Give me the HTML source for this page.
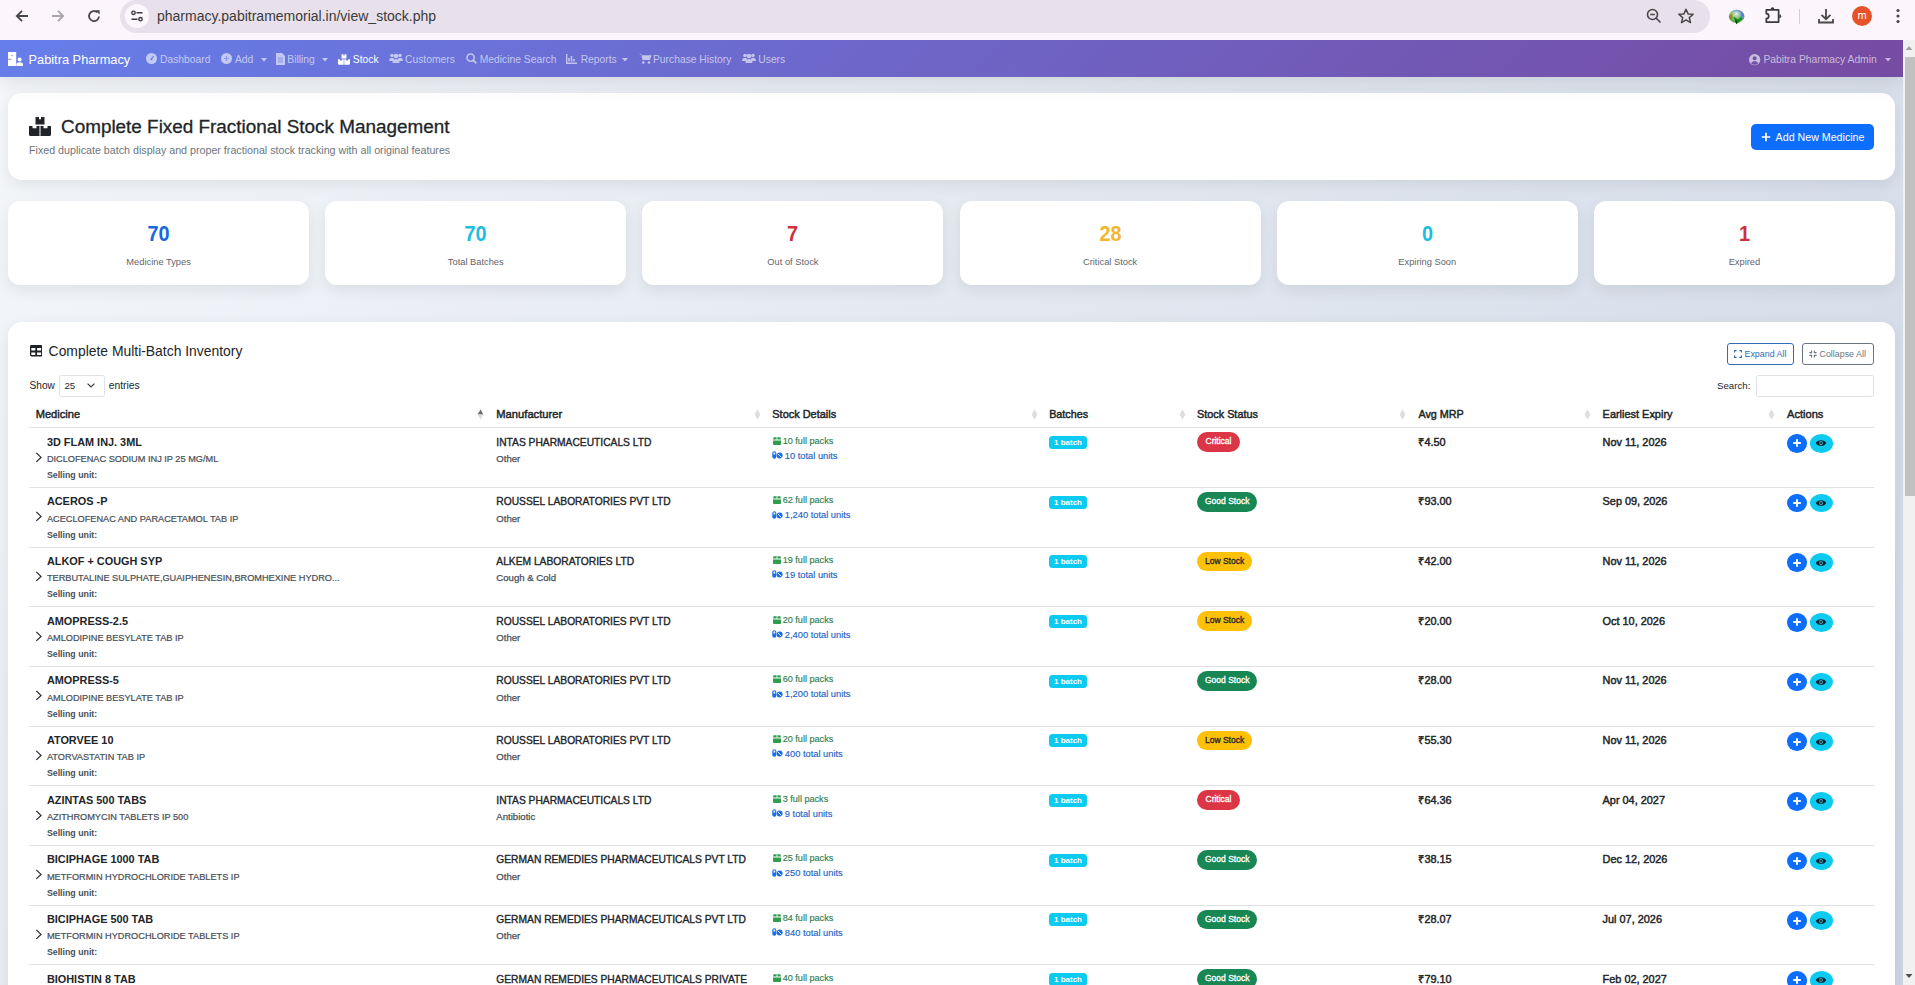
<!DOCTYPE html>
<html><head><meta charset="utf-8"><title>Stock</title>
<style>
*{box-sizing:border-box;margin:0;padding:0}
html,body{width:1915px;height:985px;overflow:hidden}
body{position:relative;font-family:"Liberation Sans",sans-serif;background:#fcf5fb;color:#212529}
.a{position:absolute;white-space:nowrap;line-height:1}
#chrome{position:absolute;left:0;top:0;width:1915px;height:40px;background:#fcf5fb}
#pill{position:absolute;left:120px;top:0;width:1590px;height:33px;background:#e8e0ea;border-radius:16.5px}
#page{position:absolute;left:0;top:40px;width:1903px;height:945px;overflow:hidden;background:linear-gradient(135deg,#f5f7fa 0%,#cdd6e5 100%)}
#nav{position:absolute;left:0;top:0;width:1903px;height:37px;background:linear-gradient(135deg,#667eea 0%,#764ba2 100%);box-shadow:0 4px 22px rgba(0,0,0,0.11);z-index:1}
.card{position:absolute;background:#fff;border-radius:14px;box-shadow:0 5px 15px rgba(0,0,0,0.08)}
.navt{color:rgba(255,255,255,0.62);font-size:10.3px}
.row{position:absolute;left:29px;width:1845px;height:59.65px;border-bottom:1px solid #dee2e6}
.row>div{position:absolute;white-space:nowrap;line-height:1}
.chev{left:7px;top:25px;width:8px;height:10px}
.chev svg{display:block}
.mname{left:18px;top:9.2px;font-size:10.8px;font-weight:700;color:#212529}
.gen{left:18px;top:26.3px;font-size:9.2px;color:#5c636a}
.sell{left:18px;top:42.2px;font-size:8.8px;font-weight:700;color:#495057}
.mfr{left:467px;top:9.5px;font-size:10.15px;font-weight:700;color:#212529}
.cat{left:467px;top:26px;font-size:9.6px;color:#5c636a}
.packs{left:743.5px;top:8px;font-size:9.1px;color:#198754}
.units{left:743.5px;top:23.5px;font-size:9.3px;color:#0d6efd}
.packs svg,.units svg{position:absolute;left:0;top:1px}
.packs span{position:absolute;left:10px;top:0}
.units span{position:absolute;left:12px;top:0}
.bbadge{width:38px;height:13.3px;border-radius:3.5px;background:#0dcaf0;color:#fff;font-size:8px;font-weight:700;text-align:center;line-height:13.8px!important}
.sbadge{height:19.8px;border-radius:10px;font-size:8.5px;font-weight:400;line-height:19.8px!important;padding:0 8px;min-width:43px;text-align:center;-webkit-text-stroke:0.3px currentColor}
.crit{background:#dc3545;color:#fff}
.good{background:#198754;color:#fff}
.low{background:#ffc107;color:#212529}
.mrp{left:1389.4px;top:9.5px;font-size:10.9px;font-weight:700;color:#212529}
.exp{left:1573.6px;top:9.5px;font-size:10.75px;font-weight:700;color:#212529}
.actplus{left:1758px;top:6.5px;width:19.5px;height:18.7px;border-radius:50%;background:#0d6efd}
.acteye{left:1781px;top:6.5px;width:22.7px;height:18.7px;border-radius:50%;background:#0dcaf0}
.actplus svg,.acteye svg{position:absolute;left:50%;top:50%;transform:translate(-50%,-50%)}
.th{position:absolute;top:409px;font-size:10.3px;font-weight:700;color:#212529;line-height:1;white-space:nowrap}
.sort{position:absolute;top:408px;width:7px;height:12px}
.stnum{position:absolute;width:301px;text-align:center;top:222px;font-size:20.7px;font-weight:700;line-height:1}
.stlab{position:absolute;width:301px;text-align:center;top:256px;font-size:9.3px;color:#6c757d;line-height:1}
#sb{position:absolute;left:1903px;top:40px;width:12px;height:945px;background:#f1f1f1}
#thumb{position:absolute;left:2px;top:17px;width:10px;height:439px;background:#c1c1c1}
</style></head><body>
<div id="chrome">
 <svg class="a" style="left:14px;top:8px" width="16" height="16" viewBox="0 0 16 16"><path d="M14 8H3M8 2.8L2.8 8L8 13.2" fill="none" stroke="#474747" stroke-width="1.8"/></svg>
 <svg class="a" style="left:50px;top:8px" width="16" height="16" viewBox="0 0 16 16"><path d="M2 8H13M8 2.8L13.2 8L8 13.2" fill="none" stroke="#a9a6a9" stroke-width="1.8"/></svg>
 <svg class="a" style="left:86px;top:8px" width="16" height="16" viewBox="0 0 16 16"><path d="M13 8.5A5 5 0 1 1 11.2 4.2" fill="none" stroke="#474747" stroke-width="1.8"/><path d="M9.2 2.2H13.6V6.6Z" fill="#474747"/></svg>
 <div id="pill"></div>
 <div class="a" style="left:125px;top:4px;width:24px;height:24px;border-radius:50%;background:#fcf7fc"></div>
 <svg class="a" style="left:130px;top:9px" width="14" height="14" viewBox="0 0 14 14"><circle cx="3.5" cy="3.8" r="1.7" fill="none" stroke="#3a3a3a" stroke-width="1.4"/><path d="M6.5 3.8H12.5M1.5 10.2H7.5" stroke="#3a3a3a" stroke-width="1.5"/><circle cx="10.5" cy="10.2" r="1.7" fill="none" stroke="#3a3a3a" stroke-width="1.4"/></svg>
 <div class="a" style="left:157px;top:9px;font-size:14px;color:#3b3b3b">pharmacy.pabitramemorial.in/view_stock.php</div>
 <svg class="a" style="left:1646px;top:8px" width="16" height="16" viewBox="0 0 16 16"><circle cx="6.5" cy="6.5" r="5" fill="none" stroke="#474747" stroke-width="1.6"/><path d="M4.2 6.5H8.8M10.2 10.2L14.5 14.5" stroke="#474747" stroke-width="1.6"/></svg>
 <svg class="a" style="left:1677px;top:8px" width="18" height="16" viewBox="0 0 18 16"><path d="M9 1.2L11.1 5.9L16.2 6.3L12.3 9.6L13.5 14.6L9 11.9L4.5 14.6L5.7 9.6L1.8 6.3L6.9 5.9Z" fill="none" stroke="#474747" stroke-width="1.5" stroke-linejoin="round"/></svg>
 <svg class="a" style="left:1727.5px;top:8.5px" width="17" height="16" viewBox="0 0 17 16"><defs><linearGradient id="g1" x1="0" y1="1" x2="1" y2="0"><stop offset="0" stop-color="#4a9a3a"/><stop offset="0.45" stop-color="#8cc860"/><stop offset="0.7" stop-color="#5a90c8"/><stop offset="1" stop-color="#2a5aa0"/></linearGradient><radialGradient id="g2" cx="0.5" cy="0.3" r="0.35"><stop offset="0" stop-color="#f0ffe0" stop-opacity="0.9"/><stop offset="1" stop-color="#f0ffe0" stop-opacity="0"/></radialGradient></defs><ellipse cx="8.6" cy="7.4" rx="7.8" ry="6.6" fill="url(#g1)"/><ellipse cx="8.6" cy="7.4" rx="7.8" ry="6.6" fill="url(#g2)"/><path d="M1.2 8.5C1.8 5.6 3.5 4.6 4.8 5.4C4.2 6.8 3.8 8.5 4 10.5C2.6 10.6 1.6 10 1.2 8.5Z" fill="#b5653a" opacity="0.7"/><path d="M5.6 7.4L10 10.6L13.6 7.8L14.4 10L8.4 15.2L6.6 10.6Z" fill="#148a1c"/><path d="M8.4 15.2L6.6 10.6L9.8 12.2Z" fill="#0a4a10"/></svg>
 <svg class="a" style="left:1765px;top:7px" width="17" height="16" viewBox="0 0 17 16"><path d="M1.3 2.9H13.6V15.1H1.3V11.6A2.4 2.4 0 0 0 1.3 6.6Z" fill="none" stroke="#3a3a3a" stroke-width="1.7" stroke-linejoin="round"/><path d="M5.7 2.2A1.85 1.85 0 0 1 9.4 2.2Z" fill="#3a3a3a"/><path d="M14.3 7.3A1.9 1.9 0 0 1 14.3 11.1Z" fill="#3a3a3a"/></svg>
 <div class="a" style="left:1799px;top:9px;width:1px;height:15px;background:#d6cfd8"></div>
 <svg class="a" style="left:1817px;top:8px" width="18" height="16" viewBox="0 0 18 16"><path d="M9 1V11M4.5 6.8L9 11.2L13.5 6.8M2 11V14.5H16V11" fill="none" stroke="#474747" stroke-width="1.8"/></svg>
 <div class="a" style="left:1852px;top:6px;width:20px;height:20px;border-radius:50%;background:#e4532a;color:#fff;font-size:11px;text-align:center;line-height:19px">m</div>
 <svg class="a" style="left:1895px;top:8px" width="6" height="16" viewBox="0 0 6 16"><circle cx="3" cy="2.5" r="1.6" fill="#474747"/><circle cx="3" cy="8" r="1.6" fill="#474747"/><circle cx="3" cy="13.5" r="1.6" fill="#474747"/></svg>
</div>

<div id="page">
 <div id="nav">
  <svg class="a" style="left:8px;top:12px" width="15.5" height="14" viewBox="0 0 15.5 14"><path d="M0 0H8.2V14H0Z" fill="#fff"/><path d="M2.8 3.2L4.1 4.6L5.4 3.2Z" fill="#8a90c0"/><path d="M0 7.3H3.6" stroke="#8088c8" stroke-width="0.9"/><circle cx="11.6" cy="7.6" r="2" fill="#fff"/><path d="M8.4 14V12.2C8.4 10.9 9.6 10.2 11.6 10.2S15 10.9 15 12.2V14Z" fill="#fff"/></svg>
  <div class="a" style="left:28.5px;top:14px;font-size:12.8px;color:#fff">Pabitra Pharmacy</div>
  <svg class="a" style="left:145.8px;top:13px" width="11" height="11" viewBox="0 0 11 11"><circle cx="5.5" cy="5.5" r="5.5" fill="rgba(255,255,255,0.6)"/><path d="M5.5 6L7.5 3" stroke="#667eea" stroke-width="1.2"/><circle cx="5.5" cy="6.3" r="1" fill="#667eea"/></svg>
<div class="a" style="left:160px;top:15px;font-size:10.3px;color:rgba(255,255,255,0.62);font-weight:400;">Dashboard</div>
<svg class="a" style="left:221.4px;top:13px" width="11" height="11" viewBox="0 0 11 11"><circle cx="5.5" cy="5.5" r="5.5" fill="rgba(255,255,255,0.6)"/><path d="M5.5 3V8M3 5.5H8" stroke="rgba(102,126,234,0.6)" stroke-width="1.2"/></svg>
<div class="a" style="left:235px;top:15px;font-size:10.3px;color:rgba(255,255,255,0.62);font-weight:400;">Add</div>
<svg class="a" style="left:260.5px;top:17.5px" width="6" height="4" viewBox="0 0 6 4"><path d="M0 0H6L3 3.5Z" fill="rgba(255,255,255,0.6)"/></svg>
<svg class="a" style="left:276px;top:12.5px" width="9" height="12" viewBox="0 0 9 12"><path d="M0 0H6L9 3V12H0Z" fill="rgba(255,255,255,0.6)"/><path d="M2 5H7M2 7H7M2 9H7" stroke="rgba(100,110,220,0.7)" stroke-width="0.8"/></svg>
<div class="a" style="left:287.3px;top:15px;font-size:10.3px;color:rgba(255,255,255,0.62);font-weight:400;">Billing</div>
<svg class="a" style="left:321.5px;top:17.5px" width="6" height="4" viewBox="0 0 6 4"><path d="M0 0H6L3 3.5Z" fill="rgba(255,255,255,0.6)"/></svg>
<svg class="a" style="left:338px;top:14px" width="12" height="11" viewBox="0 0 22 19"><path d="M6.5 0H10V2.2H12V0H15.5V7.5H6.5Z" fill="#fff"/><path d="M0 9H3.5V11.2H7.5V9H10.5V19H1.5A1.5 1.5 0 0 1 0 17.5Z" fill="#fff"/><path d="M11.5 9H14.5V11.2H18.5V9H22V17.5A1.5 1.5 0 0 1 20.5 19H11.5Z" fill="#fff"/></svg>
<div class="a" style="left:352.8px;top:15px;font-size:10.3px;color:#fff;font-weight:400;">Stock</div>
<svg class="a" style="left:389px;top:13px" width="14" height="10" viewBox="0 0 14 10"><circle cx="3" cy="2.5" r="1.8" fill="rgba(255,255,255,0.6)"/><circle cx="11" cy="2.5" r="1.8" fill="rgba(255,255,255,0.6)"/><circle cx="7" cy="3" r="2.3" fill="rgba(255,255,255,0.6)"/><path d="M0 8C0 5.5 1.5 5 3 5S5 5.5 5 6V8ZM9 6C9 5.5 9.5 5 11 5S14 5.5 14 8H9ZM3.5 10C3.5 7 5 6 7 6S10.5 7 10.5 10Z" fill="rgba(255,255,255,0.6)"/></svg>
<div class="a" style="left:405px;top:15px;font-size:10.3px;color:rgba(255,255,255,0.62);font-weight:400;">Customers</div>
<svg class="a" style="left:465.5px;top:13px" width="11" height="11" viewBox="0 0 11 11"><circle cx="4.6" cy="4.6" r="3.6" fill="none" stroke="rgba(255,255,255,0.6)" stroke-width="1.6"/><path d="M7.3 7.3L10.3 10.3" stroke="rgba(255,255,255,0.6)" stroke-width="1.8"/></svg>
<div class="a" style="left:479.8px;top:15px;font-size:10.3px;color:rgba(255,255,255,0.62);font-weight:400;">Medicine Search</div>
<svg class="a" style="left:566.4px;top:13.5px" width="11" height="10" viewBox="0 0 11 10"><path d="M0.7 0V9.3H11" fill="none" stroke="rgba(255,255,255,0.6)" stroke-width="1.4"/><path d="M3 7.5V4M5.5 7.5V2M8 7.5V5" stroke="rgba(255,255,255,0.6)" stroke-width="1.6"/></svg>
<div class="a" style="left:580.7px;top:15px;font-size:10.3px;color:rgba(255,255,255,0.62);font-weight:400;">Reports</div>
<svg class="a" style="left:621.5px;top:17.5px" width="6" height="4" viewBox="0 0 6 4"><path d="M0 0H6L3 3.5Z" fill="rgba(255,255,255,0.6)"/></svg>
<svg class="a" style="left:638.8px;top:13px" width="13" height="11" viewBox="0 0 13 11"><path d="M0 0.8H2.2L3.5 7H11L12.5 2.2H2.8Z" fill="rgba(255,255,255,0.6)"/><circle cx="4.3" cy="9.5" r="1.3" fill="rgba(255,255,255,0.6)"/><circle cx="10" cy="9.5" r="1.3" fill="rgba(255,255,255,0.6)"/></svg>
<div class="a" style="left:653px;top:15px;font-size:10.3px;color:rgba(255,255,255,0.62);font-weight:400;">Purchase History</div>
<svg class="a" style="left:742px;top:13px" width="14" height="10" viewBox="0 0 14 10"><circle cx="3" cy="2.5" r="1.8" fill="rgba(255,255,255,0.6)"/><circle cx="11" cy="2.5" r="1.8" fill="rgba(255,255,255,0.6)"/><circle cx="7" cy="3" r="2.3" fill="rgba(255,255,255,0.6)"/><path d="M0 8C0 5.5 1.5 5 3 5S5 5.5 5 6V8ZM9 6C9 5.5 9.5 5 11 5S14 5.5 14 8H9ZM3.5 10C3.5 7 5 6 7 6S10.5 7 10.5 10Z" fill="rgba(255,255,255,0.6)"/></svg>
<div class="a" style="left:758.3px;top:15px;font-size:10.3px;color:rgba(255,255,255,0.62);font-weight:400;">Users</div>
<svg class="a" style="left:1749.4px;top:14.3px" width="11.3" height="11.3" viewBox="0 0 12 12"><circle cx="6" cy="6" r="6" fill="rgba(255,255,255,0.62)"/><circle cx="6" cy="4.6" r="2.1" fill="#7450a6"/><path d="M2.2 9.8C3 8 4.4 7.6 6 7.6S9 8 9.8 9.8A5 5 0 0 1 2.2 9.8Z" fill="#7450a6"/></svg>
<div class="a" style="left:1763.4px;top:15px;font-size:10.3px;color:rgba(255,255,255,0.62);font-weight:400;">Pabitra Pharmacy Admin</div>
<svg class="a" style="left:1884.5px;top:17.5px" width="6" height="4" viewBox="0 0 6 4"><path d="M0 0H6L3 3.5Z" fill="rgba(255,255,255,0.6)"/></svg>
 </div>

 <!-- title card -->
 <div class="card" style="left:8px;top:53px;width:1887px;height:87px"></div>
 <svg class="a" style="left:29px;top:76.5px" width="22" height="19" viewBox="0 0 22 19"><path d="M6.5 0H10V2.2H12V0H15.5V7.5H6.5Z" fill="#212529"/><path d="M0 9H3.5V11.2H7.5V9H10.5V19H1.5A1.5 1.5 0 0 1 0 17.5Z" fill="#212529"/><path d="M11.5 9H14.5V11.2H18.5V9H22V17.5A1.5 1.5 0 0 1 20.5 19H11.5Z" fill="#212529"/></svg>
 <div class="a" style="left:61px;top:78px;font-size:18.9px;color:#212529;-webkit-text-stroke:0.3px #212529">Complete Fixed Fractional Stock Management</div>
 <div class="a" style="left:29px;top:105px;font-size:10.7px;color:#6c757d">Fixed duplicate batch display and proper fractional stock tracking with all original features</div>
 <div class="a" style="left:1751px;top:84px;width:122.5px;height:26px;border-radius:5px;background:#0d6efd"></div>
 <svg class="a" style="left:1760.5px;top:92px" width="10" height="10" viewBox="0 0 10 10"><path d="M5 0.8V9.2M0.8 5H9.2" stroke="#fff" stroke-width="1.7"/></svg>
 <div class="a" style="left:1775.6px;top:92px;font-size:10.66px;color:#fff">Add New Medicine</div>

 <div class="card" style="left:8.00px;top:161px;width:301.17px;height:84px;border-radius:12px"></div>
<div class="a" style="left:8.00px;width:301.17px;text-align:center;top:183px;font-size:21.7px;font-weight:700;color:#1668dc;transform:scaleX(0.915)">70</div>
<div class="a" style="left:8.00px;width:301.17px;text-align:center;top:218px;font-size:9.3px;color:#5f666d">Medicine Types</div>
<div class="card" style="left:325.17px;top:161px;width:301.17px;height:84px;border-radius:12px"></div>
<div class="a" style="left:325.17px;width:301.17px;text-align:center;top:183px;font-size:21.7px;font-weight:700;color:#1cbde2;transform:scaleX(0.915)">70</div>
<div class="a" style="left:325.17px;width:301.17px;text-align:center;top:218px;font-size:9.3px;color:#5f666d">Total Batches</div>
<div class="card" style="left:642.34px;top:161px;width:301.17px;height:84px;border-radius:12px"></div>
<div class="a" style="left:642.34px;width:301.17px;text-align:center;top:183px;font-size:21.7px;font-weight:700;color:#cc3040;transform:scaleX(0.915)">7</div>
<div class="a" style="left:642.34px;width:301.17px;text-align:center;top:218px;font-size:9.3px;color:#5f666d">Out of Stock</div>
<div class="card" style="left:959.51px;top:161px;width:301.17px;height:84px;border-radius:12px"></div>
<div class="a" style="left:959.51px;width:301.17px;text-align:center;top:183px;font-size:21.7px;font-weight:700;color:#f2b630;transform:scaleX(0.915)">28</div>
<div class="a" style="left:959.51px;width:301.17px;text-align:center;top:218px;font-size:9.3px;color:#5f666d">Critical Stock</div>
<div class="card" style="left:1276.68px;top:161px;width:301.17px;height:84px;border-radius:12px"></div>
<div class="a" style="left:1276.68px;width:301.17px;text-align:center;top:183px;font-size:21.7px;font-weight:700;color:#1cbde2;transform:scaleX(0.915)">0</div>
<div class="a" style="left:1276.68px;width:301.17px;text-align:center;top:218px;font-size:9.3px;color:#5f666d">Expiring Soon</div>
<div class="card" style="left:1593.85px;top:161px;width:301.17px;height:84px;border-radius:12px"></div>
<div class="a" style="left:1593.85px;width:301.17px;text-align:center;top:183px;font-size:21.7px;font-weight:700;color:#cc3040;transform:scaleX(0.915)">1</div>
<div class="a" style="left:1593.85px;width:301.17px;text-align:center;top:218px;font-size:9.3px;color:#5f666d">Expired</div>

 <!-- inventory card -->
 <div class="card" style="left:8px;top:282px;width:1887px;height:800px"></div>
</div>
<div id="tbl" style="position:absolute;left:0;top:0;width:1903px;height:985px;overflow:hidden">
 <svg class="a" style="left:29.7px;top:345.3px" width="12.4" height="11.5" viewBox="0 0 12.4 11.5"><path fill-rule="evenodd" fill="#1e2226" d="M1.5 0H10.9A1.5 1.5 0 0 1 12.4 1.5V10A1.5 1.5 0 0 1 10.9 11.5H1.5A1.5 1.5 0 0 1 0 10V1.5A1.5 1.5 0 0 1 1.5 0Z M1.3 2.9V5.6H5.3V2.9Z M7.1 2.9V5.6H11.1V2.9Z M1.3 7.4V9.9H5.3V7.4Z M7.1 7.4V9.9H11.1V7.4Z"/></svg>
 <div class="a" style="left:48.6px;top:345px;font-size:13.9px;color:#212529">Complete Multi-Batch Inventory</div>
 <div class="a" style="left:1727px;top:343px;width:67px;height:21.5px;border:1px solid #2f6db5;border-radius:3px"></div>
 <svg class="a" style="left:1734px;top:349.5px" width="8" height="8" viewBox="0 0 8 8"><path d="M0.6 2.6V0.6H2.6M5.4 0.6H7.4V2.6M7.4 5.4V7.4H5.4M2.6 7.4H0.6V5.4" fill="none" stroke="#2f6db5" stroke-width="1.1"/></svg>
 <div class="a" style="left:1744.5px;top:350px;font-size:8.9px;color:#2f6db5">Expand All</div>
 <div class="a" style="left:1802px;top:343px;width:72px;height:21.5px;border:1px solid #6c757d;border-radius:3px"></div>
 <svg class="a" style="left:1808.5px;top:349.5px" width="8" height="8" viewBox="0 0 8 8"><path d="M2.6 0.4V2.6H0.4M7.6 2.6H5.4V0.4M5.4 7.6V5.4H7.6M0.4 5.4H2.6V7.6" fill="none" stroke="#6c757d" stroke-width="1.1"/></svg>
 <div class="a" style="left:1819.5px;top:350px;font-size:8.9px;color:#6c757d">Collapse All</div>
 <div class="a" style="left:29.6px;top:381px;font-size:10.15px;color:#212529">Show</div>
 <div class="a" style="left:58.5px;top:375px;width:46px;height:21.5px;border:1px solid #dee2e6;border-radius:2.5px"></div>
 <div class="a" style="left:64.5px;top:381px;font-size:9.6px;color:#212529">25</div>
 <svg class="a" style="left:87px;top:383px" width="8" height="5" viewBox="0 0 8 5"><path d="M0.6 0.6L4 4L7.4 0.6" fill="none" stroke="#343a40" stroke-width="1.2"/></svg>
 <div class="a" style="left:108.7px;top:381px;font-size:10.3px;color:#212529">entries</div>
 <div class="a" style="left:1717px;top:381px;font-size:9.7px;color:#212529">Search:</div>
 <div class="a" style="left:1755.5px;top:375px;width:118.5px;height:21.5px;border:1px solid #dee2e6;border-radius:2.5px"></div>
 <div class="a" style="left:35.7px;top:409px;font-size:11.1px;color:#212529;font-weight:400;-webkit-text-stroke:0.45px #212529">Medicine</div>
<div class="a" style="left:496.3px;top:409px;font-size:11.2px;color:#212529;font-weight:400;-webkit-text-stroke:0.45px #212529">Manufacturer</div>
<div class="a" style="left:772.3px;top:409px;font-size:10.95px;color:#212529;font-weight:400;-webkit-text-stroke:0.45px #212529">Stock Details</div>
<div class="a" style="left:1049.2px;top:409px;font-size:10.75px;color:#212529;font-weight:400;-webkit-text-stroke:0.45px #212529">Batches</div>
<div class="a" style="left:1197px;top:409px;font-size:10.85px;color:#212529;font-weight:400;-webkit-text-stroke:0.45px #212529">Stock Status</div>
<div class="a" style="left:1418.4px;top:409px;font-size:10.8px;color:#212529;font-weight:400;-webkit-text-stroke:0.45px #212529">Avg MRP</div>
<div class="a" style="left:1602.6px;top:409px;font-size:10.95px;color:#212529;font-weight:400;-webkit-text-stroke:0.45px #212529">Earliest Expiry</div>
<div class="a" style="left:1787px;top:409px;font-size:11.1px;color:#212529;font-weight:400;-webkit-text-stroke:0.45px #212529">Actions</div>
<svg class="a" style="left:477px;top:409px" width="7" height="11" viewBox="0 0 7 11"><path d="M0.6 5.5L3.5 0.6L6.4 5.5Z" fill="#6b6b6b"/><path d="M0.6 5.5L3.5 10.4L6.4 5.5Z" fill="#dcdcdc"/></svg>
<svg class="a" style="left:753.5px;top:409px" width="7" height="11" viewBox="0 0 7 11"><path d="M0.6 5.5L3.5 0.6L6.4 5.5Z" fill="#dcdcdc"/><path d="M0.6 5.5L3.5 10.4L6.4 5.5Z" fill="#dcdcdc"/></svg>
<svg class="a" style="left:1030.5px;top:409px" width="7" height="11" viewBox="0 0 7 11"><path d="M0.6 5.5L3.5 0.6L6.4 5.5Z" fill="#dcdcdc"/><path d="M0.6 5.5L3.5 10.4L6.4 5.5Z" fill="#dcdcdc"/></svg>
<svg class="a" style="left:1178.5px;top:409px" width="7" height="11" viewBox="0 0 7 11"><path d="M0.6 5.5L3.5 0.6L6.4 5.5Z" fill="#dcdcdc"/><path d="M0.6 5.5L3.5 10.4L6.4 5.5Z" fill="#dcdcdc"/></svg>
<svg class="a" style="left:1399px;top:409px" width="7" height="11" viewBox="0 0 7 11"><path d="M0.6 5.5L3.5 0.6L6.4 5.5Z" fill="#dcdcdc"/><path d="M0.6 5.5L3.5 10.4L6.4 5.5Z" fill="#dcdcdc"/></svg>
<svg class="a" style="left:1584px;top:409px" width="7" height="11" viewBox="0 0 7 11"><path d="M0.6 5.5L3.5 0.6L6.4 5.5Z" fill="#dcdcdc"/><path d="M0.6 5.5L3.5 10.4L6.4 5.5Z" fill="#dcdcdc"/></svg>
<svg class="a" style="left:1768px;top:409px" width="7" height="11" viewBox="0 0 7 11"><path d="M0.6 5.5L3.5 0.6L6.4 5.5Z" fill="#dcdcdc"/><path d="M0.6 5.5L3.5 10.4L6.4 5.5Z" fill="#dcdcdc"/></svg>
 <div class="a" style="left:29px;top:427px;width:1845px;height:1px;background:#e0e1e3"></div>
 <svg class="a" style="left:35px;top:452px" width="8" height="11" viewBox="0 0 8 11"><path d="M1.3 0.9 L6 5.4 L1.3 9.9" fill="none" stroke="#2b2b2b" stroke-width="1.25"/></svg>
<div class="a" style="left:46.9px;top:437px;font-size:10.9px;color:#212529;font-weight:700;">3D FLAM INJ. 3ML</div>
<div class="a" style="left:46.9px;top:455px;font-size:9.2px;color:#495057;font-weight:400;-webkit-text-stroke:0.22px #495057">DICLOFENAC SODIUM INJ IP 25 MG/ML</div>
<div class="a" style="left:46.9px;top:471px;font-size:8.8px;color:#495057;font-weight:700;">Selling unit:</div>
<div class="a" style="left:496.3px;top:438px;font-size:10.25px;color:#212529;font-weight:400;-webkit-text-stroke:0.35px #212529">INTAS PHARMACEUTICALS LTD</div>
<div class="a" style="left:496.3px;top:454px;font-size:9.6px;color:#495057;font-weight:400;-webkit-text-stroke:0.25px #495057">Other</div>
<svg class="a" style="left:772.5px;top:437px" width="8" height="8" viewBox="0 0 8 8"><path d="M0 3.4H8V7A1 1 0 0 1 7 8H1A1 1 0 0 1 0 7Z" fill="#2e9e4e"/><path d="M0.6 0.3H3.6V2.6H0Z M4.4 0.3H7.4L8 2.6H4.4Z" fill="#2e9e4e"/></svg>
<div class="a" style="left:782.7px;top:437px;font-size:9.1px;color:#2f7d55;font-weight:400;-webkit-text-stroke:0.15px #2f7d55">10 full packs</div>
<svg class="a" style="left:772.3px;top:451px" width="11" height="8" viewBox="0 0 11 8"><rect x="0.3" y="0.2" width="4" height="7.6" rx="2" fill="#1a6ee8"/><rect x="1.3" y="1.2" width="2" height="2.6" rx="1" fill="#d9e8ff"/><circle cx="7.6" cy="4.6" r="3" fill="#1a6ee8"/><path d="M5.8 2.8L9.4 6.4" stroke="#fff" stroke-width="0.9"/></svg>
<div class="a" style="left:784.8px;top:452px;font-size:9.3px;color:#2563c4;font-weight:400;-webkit-text-stroke:0.15px #2563c4">10 total units</div>
<div class="a bbadge" style="left:1049px;top:435.83px">1 batch</div>
<div class="a sbadge crit" style="left:1197px;top:432.23px">Critical</div>
<div class="a" style="left:1418.4px;top:437px;font-size:10.9px;color:#212529;font-weight:400;-webkit-text-stroke:0.45px #212529">₹4.50</div>
<div class="a" style="left:1602.6px;top:437px;font-size:10.9px;color:#212529;font-weight:400;-webkit-text-stroke:0.45px #212529">Nov 11, 2026</div>
<div class="a actplus" style="left:1787px;top:434.03px"><svg width="10" height="10" viewBox="0 0 10 10"><path d="M5 1.2V8.8M1.2 5H8.8" stroke="#fff" stroke-width="1.9"/></svg></div>
<div class="a acteye" style="left:1810px;top:434.03px"><svg width="11" height="8" viewBox="0 0 11 8"><path d="M0.3 4 C2 0.2 9 0.2 10.7 4 C9 7.8 2 7.8 0.3 4Z" fill="#0b1f2a"/><circle cx="5.5" cy="4" r="1.9" fill="#4fb3c8"/><circle cx="5.5" cy="4" r="1.0" fill="#0b1f2a"/></svg></div>
<div class="a" style="left:29px;top:487px;width:1845px;height:1px;background:#e0e1e3"></div>
<svg class="a" style="left:35px;top:511px" width="8" height="11" viewBox="0 0 8 11"><path d="M1.3 0.9 L6 5.4 L1.3 9.9" fill="none" stroke="#2b2b2b" stroke-width="1.25"/></svg>
<div class="a" style="left:46.9px;top:496px;font-size:10.9px;color:#212529;font-weight:700;">ACEROS -P</div>
<div class="a" style="left:46.9px;top:515px;font-size:9.2px;color:#495057;font-weight:400;-webkit-text-stroke:0.22px #495057">ACECLOFENAC AND PARACETAMOL TAB IP</div>
<div class="a" style="left:46.9px;top:531px;font-size:8.8px;color:#495057;font-weight:700;">Selling unit:</div>
<div class="a" style="left:496.3px;top:497px;font-size:10.25px;color:#212529;font-weight:400;-webkit-text-stroke:0.35px #212529">ROUSSEL LABORATORIES PVT LTD</div>
<div class="a" style="left:496.3px;top:514px;font-size:9.6px;color:#495057;font-weight:400;-webkit-text-stroke:0.25px #495057">Other</div>
<svg class="a" style="left:772.5px;top:496px" width="8" height="8" viewBox="0 0 8 8"><path d="M0 3.4H8V7A1 1 0 0 1 7 8H1A1 1 0 0 1 0 7Z" fill="#2e9e4e"/><path d="M0.6 0.3H3.6V2.6H0Z M4.4 0.3H7.4L8 2.6H4.4Z" fill="#2e9e4e"/></svg>
<div class="a" style="left:782.7px;top:496px;font-size:9.1px;color:#2f7d55;font-weight:400;-webkit-text-stroke:0.15px #2f7d55">62 full packs</div>
<svg class="a" style="left:772.3px;top:511px" width="11" height="8" viewBox="0 0 11 8"><rect x="0.3" y="0.2" width="4" height="7.6" rx="2" fill="#1a6ee8"/><rect x="1.3" y="1.2" width="2" height="2.6" rx="1" fill="#d9e8ff"/><circle cx="7.6" cy="4.6" r="3" fill="#1a6ee8"/><path d="M5.8 2.8L9.4 6.4" stroke="#fff" stroke-width="0.9"/></svg>
<div class="a" style="left:784.8px;top:511px;font-size:9.3px;color:#2563c4;font-weight:400;-webkit-text-stroke:0.15px #2563c4">1,240 total units</div>
<div class="a bbadge" style="left:1049px;top:495.50px">1 batch</div>
<div class="a sbadge good" style="left:1197px;top:491.90px">Good Stock</div>
<div class="a" style="left:1418.4px;top:496px;font-size:10.9px;color:#212529;font-weight:400;-webkit-text-stroke:0.45px #212529">₹93.00</div>
<div class="a" style="left:1602.6px;top:496px;font-size:10.9px;color:#212529;font-weight:400;-webkit-text-stroke:0.45px #212529">Sep 09, 2026</div>
<div class="a actplus" style="left:1787px;top:493.70px"><svg width="10" height="10" viewBox="0 0 10 10"><path d="M5 1.2V8.8M1.2 5H8.8" stroke="#fff" stroke-width="1.9"/></svg></div>
<div class="a acteye" style="left:1810px;top:493.70px"><svg width="11" height="8" viewBox="0 0 11 8"><path d="M0.3 4 C2 0.2 9 0.2 10.7 4 C9 7.8 2 7.8 0.3 4Z" fill="#0b1f2a"/><circle cx="5.5" cy="4" r="1.9" fill="#4fb3c8"/><circle cx="5.5" cy="4" r="1.0" fill="#0b1f2a"/></svg></div>
<div class="a" style="left:29px;top:547px;width:1845px;height:1px;background:#e0e1e3"></div>
<svg class="a" style="left:35px;top:571px" width="8" height="11" viewBox="0 0 8 11"><path d="M1.3 0.9 L6 5.4 L1.3 9.9" fill="none" stroke="#2b2b2b" stroke-width="1.25"/></svg>
<div class="a" style="left:46.9px;top:556px;font-size:10.9px;color:#212529;font-weight:700;">ALKOF + COUGH SYP</div>
<div class="a" style="left:46.9px;top:574px;font-size:9.2px;color:#495057;font-weight:400;-webkit-text-stroke:0.22px #495057">TERBUTALINE SULPHATE,GUAIPHENESIN,BROMHEXINE HYDRO...</div>
<div class="a" style="left:46.9px;top:590px;font-size:8.8px;color:#495057;font-weight:700;">Selling unit:</div>
<div class="a" style="left:496.3px;top:557px;font-size:10.25px;color:#212529;font-weight:400;-webkit-text-stroke:0.35px #212529">ALKEM LABORATORIES LTD</div>
<div class="a" style="left:496.3px;top:573px;font-size:9.6px;color:#495057;font-weight:400;-webkit-text-stroke:0.25px #495057">Cough &amp; Cold</div>
<svg class="a" style="left:772.5px;top:556px" width="8" height="8" viewBox="0 0 8 8"><path d="M0 3.4H8V7A1 1 0 0 1 7 8H1A1 1 0 0 1 0 7Z" fill="#2e9e4e"/><path d="M0.6 0.3H3.6V2.6H0Z M4.4 0.3H7.4L8 2.6H4.4Z" fill="#2e9e4e"/></svg>
<div class="a" style="left:782.7px;top:556px;font-size:9.1px;color:#2f7d55;font-weight:400;-webkit-text-stroke:0.15px #2f7d55">19 full packs</div>
<svg class="a" style="left:772.3px;top:570px" width="11" height="8" viewBox="0 0 11 8"><rect x="0.3" y="0.2" width="4" height="7.6" rx="2" fill="#1a6ee8"/><rect x="1.3" y="1.2" width="2" height="2.6" rx="1" fill="#d9e8ff"/><circle cx="7.6" cy="4.6" r="3" fill="#1a6ee8"/><path d="M5.8 2.8L9.4 6.4" stroke="#fff" stroke-width="0.9"/></svg>
<div class="a" style="left:784.8px;top:571px;font-size:9.3px;color:#2563c4;font-weight:400;-webkit-text-stroke:0.15px #2563c4">19 total units</div>
<div class="a bbadge" style="left:1049px;top:555.16px">1 batch</div>
<div class="a sbadge low" style="left:1197px;top:551.56px">Low Stock</div>
<div class="a" style="left:1418.4px;top:556px;font-size:10.9px;color:#212529;font-weight:400;-webkit-text-stroke:0.45px #212529">₹42.00</div>
<div class="a" style="left:1602.6px;top:556px;font-size:10.9px;color:#212529;font-weight:400;-webkit-text-stroke:0.45px #212529">Nov 11, 2026</div>
<div class="a actplus" style="left:1787px;top:553.36px"><svg width="10" height="10" viewBox="0 0 10 10"><path d="M5 1.2V8.8M1.2 5H8.8" stroke="#fff" stroke-width="1.9"/></svg></div>
<div class="a acteye" style="left:1810px;top:553.36px"><svg width="11" height="8" viewBox="0 0 11 8"><path d="M0.3 4 C2 0.2 9 0.2 10.7 4 C9 7.8 2 7.8 0.3 4Z" fill="#0b1f2a"/><circle cx="5.5" cy="4" r="1.9" fill="#4fb3c8"/><circle cx="5.5" cy="4" r="1.0" fill="#0b1f2a"/></svg></div>
<div class="a" style="left:29px;top:606px;width:1845px;height:1px;background:#e0e1e3"></div>
<svg class="a" style="left:35px;top:631px" width="8" height="11" viewBox="0 0 8 11"><path d="M1.3 0.9 L6 5.4 L1.3 9.9" fill="none" stroke="#2b2b2b" stroke-width="1.25"/></svg>
<div class="a" style="left:46.9px;top:616px;font-size:10.9px;color:#212529;font-weight:700;">AMOPRESS-2.5</div>
<div class="a" style="left:46.9px;top:634px;font-size:9.2px;color:#495057;font-weight:400;-webkit-text-stroke:0.22px #495057">AMLODIPINE BESYLATE TAB IP</div>
<div class="a" style="left:46.9px;top:650px;font-size:8.8px;color:#495057;font-weight:700;">Selling unit:</div>
<div class="a" style="left:496.3px;top:617px;font-size:10.25px;color:#212529;font-weight:400;-webkit-text-stroke:0.35px #212529">ROUSSEL LABORATORIES PVT LTD</div>
<div class="a" style="left:496.3px;top:633px;font-size:9.6px;color:#495057;font-weight:400;-webkit-text-stroke:0.25px #495057">Other</div>
<svg class="a" style="left:772.5px;top:616px" width="8" height="8" viewBox="0 0 8 8"><path d="M0 3.4H8V7A1 1 0 0 1 7 8H1A1 1 0 0 1 0 7Z" fill="#2e9e4e"/><path d="M0.6 0.3H3.6V2.6H0Z M4.4 0.3H7.4L8 2.6H4.4Z" fill="#2e9e4e"/></svg>
<div class="a" style="left:782.7px;top:616px;font-size:9.1px;color:#2f7d55;font-weight:400;-webkit-text-stroke:0.15px #2f7d55">20 full packs</div>
<svg class="a" style="left:772.3px;top:630px" width="11" height="8" viewBox="0 0 11 8"><rect x="0.3" y="0.2" width="4" height="7.6" rx="2" fill="#1a6ee8"/><rect x="1.3" y="1.2" width="2" height="2.6" rx="1" fill="#d9e8ff"/><circle cx="7.6" cy="4.6" r="3" fill="#1a6ee8"/><path d="M5.8 2.8L9.4 6.4" stroke="#fff" stroke-width="0.9"/></svg>
<div class="a" style="left:784.8px;top:631px;font-size:9.3px;color:#2563c4;font-weight:400;-webkit-text-stroke:0.15px #2563c4">2,400 total units</div>
<div class="a bbadge" style="left:1049px;top:614.83px">1 batch</div>
<div class="a sbadge low" style="left:1197px;top:611.23px">Low Stock</div>
<div class="a" style="left:1418.4px;top:616px;font-size:10.9px;color:#212529;font-weight:400;-webkit-text-stroke:0.45px #212529">₹20.00</div>
<div class="a" style="left:1602.6px;top:616px;font-size:10.9px;color:#212529;font-weight:400;-webkit-text-stroke:0.45px #212529">Oct 10, 2026</div>
<div class="a actplus" style="left:1787px;top:613.03px"><svg width="10" height="10" viewBox="0 0 10 10"><path d="M5 1.2V8.8M1.2 5H8.8" stroke="#fff" stroke-width="1.9"/></svg></div>
<div class="a acteye" style="left:1810px;top:613.03px"><svg width="11" height="8" viewBox="0 0 11 8"><path d="M0.3 4 C2 0.2 9 0.2 10.7 4 C9 7.8 2 7.8 0.3 4Z" fill="#0b1f2a"/><circle cx="5.5" cy="4" r="1.9" fill="#4fb3c8"/><circle cx="5.5" cy="4" r="1.0" fill="#0b1f2a"/></svg></div>
<div class="a" style="left:29px;top:666px;width:1845px;height:1px;background:#e0e1e3"></div>
<svg class="a" style="left:35px;top:690px" width="8" height="11" viewBox="0 0 8 11"><path d="M1.3 0.9 L6 5.4 L1.3 9.9" fill="none" stroke="#2b2b2b" stroke-width="1.25"/></svg>
<div class="a" style="left:46.9px;top:675px;font-size:10.9px;color:#212529;font-weight:700;">AMOPRESS-5</div>
<div class="a" style="left:46.9px;top:694px;font-size:9.2px;color:#495057;font-weight:400;-webkit-text-stroke:0.22px #495057">AMLODIPINE BESYLATE TAB IP</div>
<div class="a" style="left:46.9px;top:710px;font-size:8.8px;color:#495057;font-weight:700;">Selling unit:</div>
<div class="a" style="left:496.3px;top:676px;font-size:10.25px;color:#212529;font-weight:400;-webkit-text-stroke:0.35px #212529">ROUSSEL LABORATORIES PVT LTD</div>
<div class="a" style="left:496.3px;top:693px;font-size:9.6px;color:#495057;font-weight:400;-webkit-text-stroke:0.25px #495057">Other</div>
<svg class="a" style="left:772.5px;top:675px" width="8" height="8" viewBox="0 0 8 8"><path d="M0 3.4H8V7A1 1 0 0 1 7 8H1A1 1 0 0 1 0 7Z" fill="#2e9e4e"/><path d="M0.6 0.3H3.6V2.6H0Z M4.4 0.3H7.4L8 2.6H4.4Z" fill="#2e9e4e"/></svg>
<div class="a" style="left:782.7px;top:675px;font-size:9.1px;color:#2f7d55;font-weight:400;-webkit-text-stroke:0.15px #2f7d55">60 full packs</div>
<svg class="a" style="left:772.3px;top:690px" width="11" height="8" viewBox="0 0 11 8"><rect x="0.3" y="0.2" width="4" height="7.6" rx="2" fill="#1a6ee8"/><rect x="1.3" y="1.2" width="2" height="2.6" rx="1" fill="#d9e8ff"/><circle cx="7.6" cy="4.6" r="3" fill="#1a6ee8"/><path d="M5.8 2.8L9.4 6.4" stroke="#fff" stroke-width="0.9"/></svg>
<div class="a" style="left:784.8px;top:690px;font-size:9.3px;color:#2563c4;font-weight:400;-webkit-text-stroke:0.15px #2563c4">1,200 total units</div>
<div class="a bbadge" style="left:1049px;top:674.50px">1 batch</div>
<div class="a sbadge good" style="left:1197px;top:670.90px">Good Stock</div>
<div class="a" style="left:1418.4px;top:675px;font-size:10.9px;color:#212529;font-weight:400;-webkit-text-stroke:0.45px #212529">₹28.00</div>
<div class="a" style="left:1602.6px;top:675px;font-size:10.9px;color:#212529;font-weight:400;-webkit-text-stroke:0.45px #212529">Nov 11, 2026</div>
<div class="a actplus" style="left:1787px;top:672.70px"><svg width="10" height="10" viewBox="0 0 10 10"><path d="M5 1.2V8.8M1.2 5H8.8" stroke="#fff" stroke-width="1.9"/></svg></div>
<div class="a acteye" style="left:1810px;top:672.70px"><svg width="11" height="8" viewBox="0 0 11 8"><path d="M0.3 4 C2 0.2 9 0.2 10.7 4 C9 7.8 2 7.8 0.3 4Z" fill="#0b1f2a"/><circle cx="5.5" cy="4" r="1.9" fill="#4fb3c8"/><circle cx="5.5" cy="4" r="1.0" fill="#0b1f2a"/></svg></div>
<div class="a" style="left:29px;top:726px;width:1845px;height:1px;background:#e0e1e3"></div>
<svg class="a" style="left:35px;top:750px" width="8" height="11" viewBox="0 0 8 11"><path d="M1.3 0.9 L6 5.4 L1.3 9.9" fill="none" stroke="#2b2b2b" stroke-width="1.25"/></svg>
<div class="a" style="left:46.9px;top:735px;font-size:10.9px;color:#212529;font-weight:700;">ATORVEE 10</div>
<div class="a" style="left:46.9px;top:753px;font-size:9.2px;color:#495057;font-weight:400;-webkit-text-stroke:0.22px #495057">ATORVASTATIN TAB IP</div>
<div class="a" style="left:46.9px;top:769px;font-size:8.8px;color:#495057;font-weight:700;">Selling unit:</div>
<div class="a" style="left:496.3px;top:736px;font-size:10.25px;color:#212529;font-weight:400;-webkit-text-stroke:0.35px #212529">ROUSSEL LABORATORIES PVT LTD</div>
<div class="a" style="left:496.3px;top:752px;font-size:9.6px;color:#495057;font-weight:400;-webkit-text-stroke:0.25px #495057">Other</div>
<svg class="a" style="left:772.5px;top:735px" width="8" height="8" viewBox="0 0 8 8"><path d="M0 3.4H8V7A1 1 0 0 1 7 8H1A1 1 0 0 1 0 7Z" fill="#2e9e4e"/><path d="M0.6 0.3H3.6V2.6H0Z M4.4 0.3H7.4L8 2.6H4.4Z" fill="#2e9e4e"/></svg>
<div class="a" style="left:782.7px;top:735px;font-size:9.1px;color:#2f7d55;font-weight:400;-webkit-text-stroke:0.15px #2f7d55">20 full packs</div>
<svg class="a" style="left:772.3px;top:749px" width="11" height="8" viewBox="0 0 11 8"><rect x="0.3" y="0.2" width="4" height="7.6" rx="2" fill="#1a6ee8"/><rect x="1.3" y="1.2" width="2" height="2.6" rx="1" fill="#d9e8ff"/><circle cx="7.6" cy="4.6" r="3" fill="#1a6ee8"/><path d="M5.8 2.8L9.4 6.4" stroke="#fff" stroke-width="0.9"/></svg>
<div class="a" style="left:784.8px;top:750px;font-size:9.3px;color:#2563c4;font-weight:400;-webkit-text-stroke:0.15px #2563c4">400 total units</div>
<div class="a bbadge" style="left:1049px;top:734.16px">1 batch</div>
<div class="a sbadge low" style="left:1197px;top:730.56px">Low Stock</div>
<div class="a" style="left:1418.4px;top:735px;font-size:10.9px;color:#212529;font-weight:400;-webkit-text-stroke:0.45px #212529">₹55.30</div>
<div class="a" style="left:1602.6px;top:735px;font-size:10.9px;color:#212529;font-weight:400;-webkit-text-stroke:0.45px #212529">Nov 11, 2026</div>
<div class="a actplus" style="left:1787px;top:732.37px"><svg width="10" height="10" viewBox="0 0 10 10"><path d="M5 1.2V8.8M1.2 5H8.8" stroke="#fff" stroke-width="1.9"/></svg></div>
<div class="a acteye" style="left:1810px;top:732.37px"><svg width="11" height="8" viewBox="0 0 11 8"><path d="M0.3 4 C2 0.2 9 0.2 10.7 4 C9 7.8 2 7.8 0.3 4Z" fill="#0b1f2a"/><circle cx="5.5" cy="4" r="1.9" fill="#4fb3c8"/><circle cx="5.5" cy="4" r="1.0" fill="#0b1f2a"/></svg></div>
<div class="a" style="left:29px;top:785px;width:1845px;height:1px;background:#e0e1e3"></div>
<svg class="a" style="left:35px;top:810px" width="8" height="11" viewBox="0 0 8 11"><path d="M1.3 0.9 L6 5.4 L1.3 9.9" fill="none" stroke="#2b2b2b" stroke-width="1.25"/></svg>
<div class="a" style="left:46.9px;top:795px;font-size:10.9px;color:#212529;font-weight:700;">AZINTAS 500 TABS</div>
<div class="a" style="left:46.9px;top:813px;font-size:9.2px;color:#495057;font-weight:400;-webkit-text-stroke:0.22px #495057">AZITHROMYCIN TABLETS IP 500</div>
<div class="a" style="left:46.9px;top:829px;font-size:8.8px;color:#495057;font-weight:700;">Selling unit:</div>
<div class="a" style="left:496.3px;top:796px;font-size:10.25px;color:#212529;font-weight:400;-webkit-text-stroke:0.35px #212529">INTAS PHARMACEUTICALS LTD</div>
<div class="a" style="left:496.3px;top:812px;font-size:9.6px;color:#495057;font-weight:400;-webkit-text-stroke:0.25px #495057">Antibiotic</div>
<svg class="a" style="left:772.5px;top:795px" width="8" height="8" viewBox="0 0 8 8"><path d="M0 3.4H8V7A1 1 0 0 1 7 8H1A1 1 0 0 1 0 7Z" fill="#2e9e4e"/><path d="M0.6 0.3H3.6V2.6H0Z M4.4 0.3H7.4L8 2.6H4.4Z" fill="#2e9e4e"/></svg>
<div class="a" style="left:782.7px;top:795px;font-size:9.1px;color:#2f7d55;font-weight:400;-webkit-text-stroke:0.15px #2f7d55">3 full packs</div>
<svg class="a" style="left:772.3px;top:809px" width="11" height="8" viewBox="0 0 11 8"><rect x="0.3" y="0.2" width="4" height="7.6" rx="2" fill="#1a6ee8"/><rect x="1.3" y="1.2" width="2" height="2.6" rx="1" fill="#d9e8ff"/><circle cx="7.6" cy="4.6" r="3" fill="#1a6ee8"/><path d="M5.8 2.8L9.4 6.4" stroke="#fff" stroke-width="0.9"/></svg>
<div class="a" style="left:784.8px;top:810px;font-size:9.3px;color:#2563c4;font-weight:400;-webkit-text-stroke:0.15px #2563c4">9 total units</div>
<div class="a bbadge" style="left:1049px;top:793.83px">1 batch</div>
<div class="a sbadge crit" style="left:1197px;top:790.23px">Critical</div>
<div class="a" style="left:1418.4px;top:795px;font-size:10.9px;color:#212529;font-weight:400;-webkit-text-stroke:0.45px #212529">₹64.36</div>
<div class="a" style="left:1602.6px;top:795px;font-size:10.9px;color:#212529;font-weight:400;-webkit-text-stroke:0.45px #212529">Apr 04, 2027</div>
<div class="a actplus" style="left:1787px;top:792.03px"><svg width="10" height="10" viewBox="0 0 10 10"><path d="M5 1.2V8.8M1.2 5H8.8" stroke="#fff" stroke-width="1.9"/></svg></div>
<div class="a acteye" style="left:1810px;top:792.03px"><svg width="11" height="8" viewBox="0 0 11 8"><path d="M0.3 4 C2 0.2 9 0.2 10.7 4 C9 7.8 2 7.8 0.3 4Z" fill="#0b1f2a"/><circle cx="5.5" cy="4" r="1.9" fill="#4fb3c8"/><circle cx="5.5" cy="4" r="1.0" fill="#0b1f2a"/></svg></div>
<div class="a" style="left:29px;top:845px;width:1845px;height:1px;background:#e0e1e3"></div>
<svg class="a" style="left:35px;top:869px" width="8" height="11" viewBox="0 0 8 11"><path d="M1.3 0.9 L6 5.4 L1.3 9.9" fill="none" stroke="#2b2b2b" stroke-width="1.25"/></svg>
<div class="a" style="left:46.9px;top:854px;font-size:10.9px;color:#212529;font-weight:700;">BICIPHAGE 1000 TAB</div>
<div class="a" style="left:46.9px;top:873px;font-size:9.2px;color:#495057;font-weight:400;-webkit-text-stroke:0.22px #495057">METFORMIN HYDROCHLORIDE TABLETS IP</div>
<div class="a" style="left:46.9px;top:889px;font-size:8.8px;color:#495057;font-weight:700;">Selling unit:</div>
<div class="a" style="left:496.3px;top:855px;font-size:10.25px;color:#212529;font-weight:400;-webkit-text-stroke:0.35px #212529">GERMAN REMEDIES PHARMACEUTICALS PVT LTD</div>
<div class="a" style="left:496.3px;top:872px;font-size:9.6px;color:#495057;font-weight:400;-webkit-text-stroke:0.25px #495057">Other</div>
<svg class="a" style="left:772.5px;top:854px" width="8" height="8" viewBox="0 0 8 8"><path d="M0 3.4H8V7A1 1 0 0 1 7 8H1A1 1 0 0 1 0 7Z" fill="#2e9e4e"/><path d="M0.6 0.3H3.6V2.6H0Z M4.4 0.3H7.4L8 2.6H4.4Z" fill="#2e9e4e"/></svg>
<div class="a" style="left:782.7px;top:854px;font-size:9.1px;color:#2f7d55;font-weight:400;-webkit-text-stroke:0.15px #2f7d55">25 full packs</div>
<svg class="a" style="left:772.3px;top:869px" width="11" height="8" viewBox="0 0 11 8"><rect x="0.3" y="0.2" width="4" height="7.6" rx="2" fill="#1a6ee8"/><rect x="1.3" y="1.2" width="2" height="2.6" rx="1" fill="#d9e8ff"/><circle cx="7.6" cy="4.6" r="3" fill="#1a6ee8"/><path d="M5.8 2.8L9.4 6.4" stroke="#fff" stroke-width="0.9"/></svg>
<div class="a" style="left:784.8px;top:869px;font-size:9.3px;color:#2563c4;font-weight:400;-webkit-text-stroke:0.15px #2563c4">250 total units</div>
<div class="a bbadge" style="left:1049px;top:853.50px">1 batch</div>
<div class="a sbadge good" style="left:1197px;top:849.90px">Good Stock</div>
<div class="a" style="left:1418.4px;top:854px;font-size:10.9px;color:#212529;font-weight:400;-webkit-text-stroke:0.45px #212529">₹38.15</div>
<div class="a" style="left:1602.6px;top:854px;font-size:10.9px;color:#212529;font-weight:400;-webkit-text-stroke:0.45px #212529">Dec 12, 2026</div>
<div class="a actplus" style="left:1787px;top:851.70px"><svg width="10" height="10" viewBox="0 0 10 10"><path d="M5 1.2V8.8M1.2 5H8.8" stroke="#fff" stroke-width="1.9"/></svg></div>
<div class="a acteye" style="left:1810px;top:851.70px"><svg width="11" height="8" viewBox="0 0 11 8"><path d="M0.3 4 C2 0.2 9 0.2 10.7 4 C9 7.8 2 7.8 0.3 4Z" fill="#0b1f2a"/><circle cx="5.5" cy="4" r="1.9" fill="#4fb3c8"/><circle cx="5.5" cy="4" r="1.0" fill="#0b1f2a"/></svg></div>
<div class="a" style="left:29px;top:905px;width:1845px;height:1px;background:#e0e1e3"></div>
<svg class="a" style="left:35px;top:929px" width="8" height="11" viewBox="0 0 8 11"><path d="M1.3 0.9 L6 5.4 L1.3 9.9" fill="none" stroke="#2b2b2b" stroke-width="1.25"/></svg>
<div class="a" style="left:46.9px;top:914px;font-size:10.9px;color:#212529;font-weight:700;">BICIPHAGE 500 TAB</div>
<div class="a" style="left:46.9px;top:932px;font-size:9.2px;color:#495057;font-weight:400;-webkit-text-stroke:0.22px #495057">METFORMIN HYDROCHLORIDE TABLETS IP</div>
<div class="a" style="left:46.9px;top:948px;font-size:8.8px;color:#495057;font-weight:700;">Selling unit:</div>
<div class="a" style="left:496.3px;top:915px;font-size:10.25px;color:#212529;font-weight:400;-webkit-text-stroke:0.35px #212529">GERMAN REMEDIES PHARMACEUTICALS PVT LTD</div>
<div class="a" style="left:496.3px;top:931px;font-size:9.6px;color:#495057;font-weight:400;-webkit-text-stroke:0.25px #495057">Other</div>
<svg class="a" style="left:772.5px;top:914px" width="8" height="8" viewBox="0 0 8 8"><path d="M0 3.4H8V7A1 1 0 0 1 7 8H1A1 1 0 0 1 0 7Z" fill="#2e9e4e"/><path d="M0.6 0.3H3.6V2.6H0Z M4.4 0.3H7.4L8 2.6H4.4Z" fill="#2e9e4e"/></svg>
<div class="a" style="left:782.7px;top:914px;font-size:9.1px;color:#2f7d55;font-weight:400;-webkit-text-stroke:0.15px #2f7d55">84 full packs</div>
<svg class="a" style="left:772.3px;top:928px" width="11" height="8" viewBox="0 0 11 8"><rect x="0.3" y="0.2" width="4" height="7.6" rx="2" fill="#1a6ee8"/><rect x="1.3" y="1.2" width="2" height="2.6" rx="1" fill="#d9e8ff"/><circle cx="7.6" cy="4.6" r="3" fill="#1a6ee8"/><path d="M5.8 2.8L9.4 6.4" stroke="#fff" stroke-width="0.9"/></svg>
<div class="a" style="left:784.8px;top:929px;font-size:9.3px;color:#2563c4;font-weight:400;-webkit-text-stroke:0.15px #2563c4">840 total units</div>
<div class="a bbadge" style="left:1049px;top:913.17px">1 batch</div>
<div class="a sbadge good" style="left:1197px;top:909.57px">Good Stock</div>
<div class="a" style="left:1418.4px;top:914px;font-size:10.9px;color:#212529;font-weight:400;-webkit-text-stroke:0.45px #212529">₹28.07</div>
<div class="a" style="left:1602.6px;top:914px;font-size:10.9px;color:#212529;font-weight:400;-webkit-text-stroke:0.45px #212529">Jul 07, 2026</div>
<div class="a actplus" style="left:1787px;top:911.37px"><svg width="10" height="10" viewBox="0 0 10 10"><path d="M5 1.2V8.8M1.2 5H8.8" stroke="#fff" stroke-width="1.9"/></svg></div>
<div class="a acteye" style="left:1810px;top:911.37px"><svg width="11" height="8" viewBox="0 0 11 8"><path d="M0.3 4 C2 0.2 9 0.2 10.7 4 C9 7.8 2 7.8 0.3 4Z" fill="#0b1f2a"/><circle cx="5.5" cy="4" r="1.9" fill="#4fb3c8"/><circle cx="5.5" cy="4" r="1.0" fill="#0b1f2a"/></svg></div>
<div class="a" style="left:29px;top:964px;width:1845px;height:1px;background:#e0e1e3"></div>
<svg class="a" style="left:35px;top:989px" width="8" height="11" viewBox="0 0 8 11"><path d="M1.3 0.9 L6 5.4 L1.3 9.9" fill="none" stroke="#2b2b2b" stroke-width="1.25"/></svg>
<div class="a" style="left:46.9px;top:974px;font-size:10.9px;color:#212529;font-weight:700;">BIOHISTIN 8 TAB</div>
<div class="a" style="left:46.9px;top:992px;font-size:9.2px;color:#495057;font-weight:400;-webkit-text-stroke:0.22px #495057">BETAHISTINE DIHYDROCHLORIDE TABLETS IP</div>
<div class="a" style="left:46.9px;top:1008px;font-size:8.8px;color:#495057;font-weight:700;">Selling unit:</div>
<div class="a" style="left:496.3px;top:975px;font-size:10.25px;color:#212529;font-weight:400;-webkit-text-stroke:0.35px #212529">GERMAN REMEDIES PHARMACEUTICALS PRIVATE</div>
<div class="a" style="left:496.3px;top:991px;font-size:9.6px;color:#495057;font-weight:400;-webkit-text-stroke:0.25px #495057">Other</div>
<svg class="a" style="left:772.5px;top:974px" width="8" height="8" viewBox="0 0 8 8"><path d="M0 3.4H8V7A1 1 0 0 1 7 8H1A1 1 0 0 1 0 7Z" fill="#2e9e4e"/><path d="M0.6 0.3H3.6V2.6H0Z M4.4 0.3H7.4L8 2.6H4.4Z" fill="#2e9e4e"/></svg>
<div class="a" style="left:782.7px;top:974px;font-size:9.1px;color:#2f7d55;font-weight:400;-webkit-text-stroke:0.15px #2f7d55">40 full packs</div>
<svg class="a" style="left:772.3px;top:988px" width="11" height="8" viewBox="0 0 11 8"><rect x="0.3" y="0.2" width="4" height="7.6" rx="2" fill="#1a6ee8"/><rect x="1.3" y="1.2" width="2" height="2.6" rx="1" fill="#d9e8ff"/><circle cx="7.6" cy="4.6" r="3" fill="#1a6ee8"/><path d="M5.8 2.8L9.4 6.4" stroke="#fff" stroke-width="0.9"/></svg>
<div class="a" style="left:784.8px;top:989px;font-size:9.3px;color:#2563c4;font-weight:400;-webkit-text-stroke:0.15px #2563c4">400 total units</div>
<div class="a bbadge" style="left:1049px;top:972.83px">1 batch</div>
<div class="a sbadge good" style="left:1197px;top:969.23px">Good Stock</div>
<div class="a" style="left:1418.4px;top:974px;font-size:10.9px;color:#212529;font-weight:400;-webkit-text-stroke:0.45px #212529">₹79.10</div>
<div class="a" style="left:1602.6px;top:974px;font-size:10.9px;color:#212529;font-weight:400;-webkit-text-stroke:0.45px #212529">Feb 02, 2027</div>
<div class="a actplus" style="left:1787px;top:971.03px"><svg width="10" height="10" viewBox="0 0 10 10"><path d="M5 1.2V8.8M1.2 5H8.8" stroke="#fff" stroke-width="1.9"/></svg></div>
<div class="a acteye" style="left:1810px;top:971.03px"><svg width="11" height="8" viewBox="0 0 11 8"><path d="M0.3 4 C2 0.2 9 0.2 10.7 4 C9 7.8 2 7.8 0.3 4Z" fill="#0b1f2a"/><circle cx="5.5" cy="4" r="1.9" fill="#4fb3c8"/><circle cx="5.5" cy="4" r="1.0" fill="#0b1f2a"/></svg></div>
<div class="a" style="left:29px;top:1024px;width:1845px;height:1px;background:#e0e1e3"></div>
</div>
<div id="sb">
 <svg class="a" style="left:2px;top:5px" width="8" height="6" viewBox="0 0 8 6"><path d="M0.5 5L4 1L7.5 5Z" fill="#a3a3a3"/></svg>
 <div id="thumb"></div>
 <svg class="a" style="left:2px;top:933px" width="8" height="6" viewBox="0 0 8 6"><path d="M0.5 1L4 5L7.5 1Z" fill="#505050"/></svg>
</div>
</body></html>
